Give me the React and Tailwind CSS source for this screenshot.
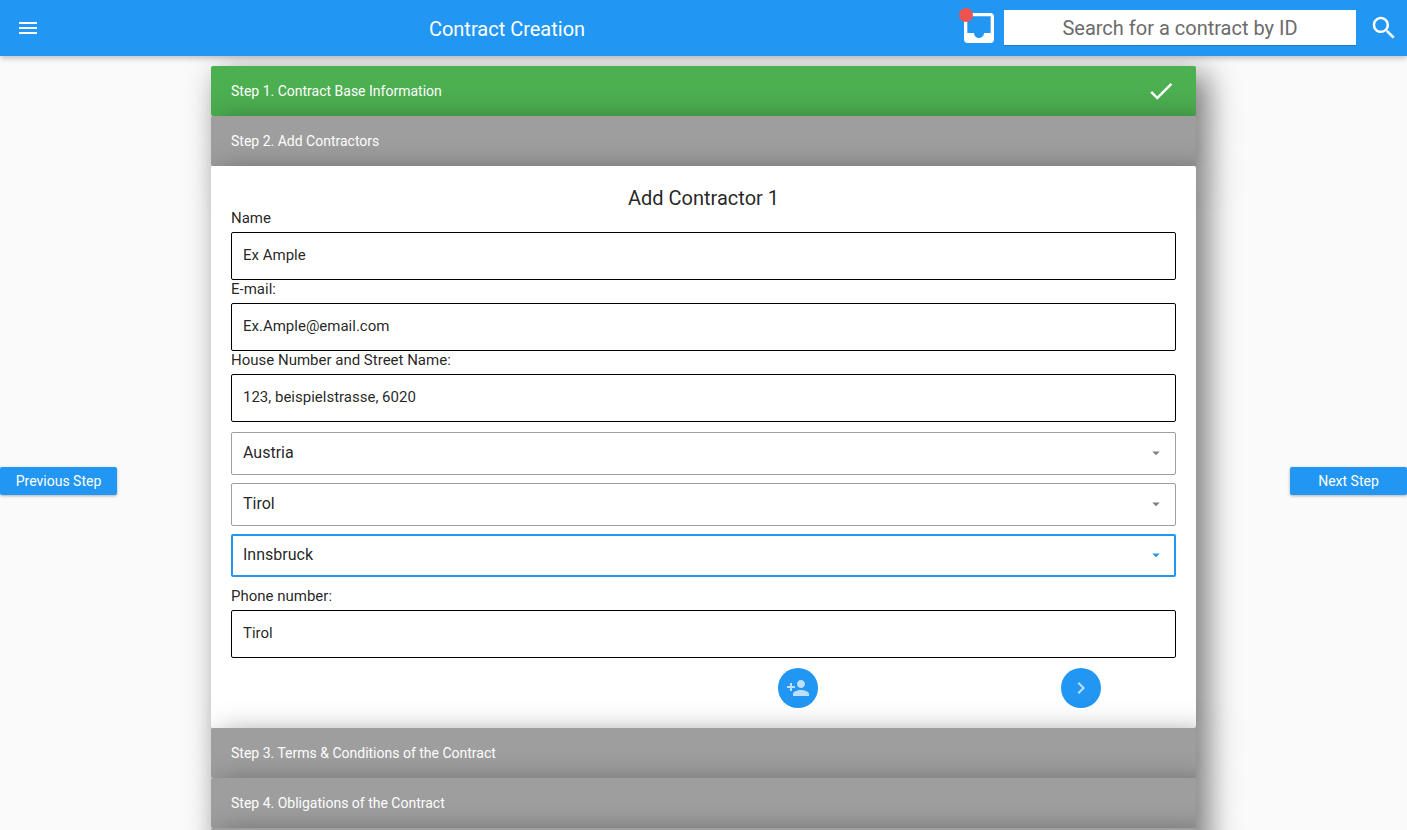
import React from "react";

const ICONS = {
  menu: "M3 18h18v-2H3v2zm0-5h18v-2H3v2zm0-7v2h18V6H3z",
  inbox:
    "M19 3H4.99c-1.11 0-1.98.89-1.98 2L3 19c0 1.1.88 2 1.99 2H19c1.1 0 2-.9 2-2V5c0-1.11-.9-2-2-2zm0 12h-4c0 1.66-1.35 3-3 3s-3-1.34-3-3H4.99V5H19v10z",
  search:
    "M15.5 14h-.79l-.28-.27C15.41 12.59 16 11.11 16 9.5 16 5.91 13.09 3 9.5 3S3 5.91 3 9.5 5.91 16 9.5 16c1.61 0 3.09-.59 4.23-1.57l.27.28v.79l5 4.99L20.49 19l-4.99-5zm-6 0C7.01 14 5 11.99 5 9.5S7.01 5 9.5 5 14 7.01 14 9.5 11.99 14 9.5 14z",
  check: "M9 16.17L4.83 12l-1.42 1.41L9 19 21 7l-1.41-1.41z",
  personAdd:
    "M15 12c2.21 0 4-1.79 4-4s-1.79-4-4-4-4 1.79-4 4 1.79 4 4 4zm-9-2V7H4v3H1v2h3v3h2v-3h3v-2H6zm9 4c-2.67 0-8 1.34-8 4v2h16v-2c0-2.66-5.33-4-8-4z",
  chevron: "M10 6L8.59 7.41 13.17 12l-4.58 4.59L10 18l6-6z",
  caret: "M7 10l5 5 5-5z",
};

function Icon({ name, className }) {
  return (
    <svg viewBox="0 0 24 24" fill="currentColor" className={className}>
      <path d={ICONS[name]} />
    </svg>
  );
}

const SHADOW = "rounded-[2px] shadow-[10px_10px_30px_2px_rgba(0,0,0,0.5)]";

function StepBar({ title, done }) {
  return (
    <div
      className={`${SHADOW} relative flex h-[50px] shrink-0 items-center justify-between pr-5 pl-5 text-sm text-white ${
        done ? "bg-[#4caf50]" : "bg-[#9e9e9e]"
      }`}
    >
      <span>{title}</span>
      {done && <Icon name="check" className="size-[30px] text-white" />}
    </div>
  );
}

function Field({ label, value }) {
  return (
    <label className="block text-[15px] text-black/87">
      <span className="block h-[23px] leading-[18px]">{label}</span>
      <input
        defaultValue={value}
        className="block h-12 w-full rounded-[2px] border border-black bg-white px-[11px] pb-[3px] outline-none"
      />
    </label>
  );
}

function Select({ value, active }) {
  return (
    <div
      className={`flex h-[43px] items-center justify-between rounded-[2px] text-base ${
        active ? "border-2 border-[#2196f3] pr-[9px] pl-[10px]" : "border border-[#9e9e9e] pr-[10px] pl-[11px]"
      }`}
    >
      <span className="pb-[2px] text-black/87">{value}</span>
      <Icon name="caret" className={`mb-px size-[18px] ${active ? "text-[#2196f3]" : "text-[#808080]"}`} />
    </div>
  );
}

function SideButton({ children }) {
  return (
    <button className="h-7 w-[117px] rounded-[2px] bg-[#2196f3] text-sm text-white shadow-[0_1px_3px_rgba(0,0,0,0.3)]">
      {children}
    </button>
  );
}

function RoundButton({ icon }) {
  return (
    <button className="flex size-10 items-center justify-center rounded-full bg-[#2196f3] text-white/70">
      <Icon name={icon} className="size-6" />
    </button>
  );
}

export default function App() {
  return (
    <div className="flex h-[830px] w-full flex-col overflow-hidden bg-[#fafafa] font-['Roboto',sans-serif]">
      <header className="relative z-10 flex h-14 shrink-0 items-center bg-[#2196f3] text-white shadow-[0_2px_6px_rgba(0,0,0,0.25)]">
        <Icon name="menu" className="ml-4 size-6" />
        <h1 className="ml-[17px] w-[900px] pt-px text-center text-xl">Contract Creation</h1>
        <div className="relative ml-[2px]">
          <Icon name="inbox" className="size-10" />
          <span className="absolute top-0 left-0 size-[14px] rounded-full bg-[#ef5350]" />
        </div>
        <input
          placeholder="Search for a contract by ID"
          className="ml-[5px] h-9 w-[352px] border-b border-[#1b78c2] bg-white text-center text-xl outline-none placeholder:text-[#6b6b6b]"
        />
        <Icon name="search" className="ml-[13px] size-[30px]" />
      </header>

      <main className="flex min-h-0 flex-1">
        <aside className="w-[211px] pt-[411px]">
          <SideButton>Previous Step</SideButton>
        </aside>

        <section className="flex w-[985px] shrink-0 flex-col pt-[10px]">
          <StepBar title="Step 1. Contract Base Information" done />
          <StepBar title="Step 2. Add Contractors" />
          <div className={`${SHADOW} relative h-[562px] shrink-0 bg-white px-5 pt-5`}>
            <h2 className="h-[23px] text-center text-xl leading-[25px] text-black/87">
              Add Contractor 1
            </h2>
            <Field label="Name" value="Ex Ample" />
            <Field label="E-mail:" value="Ex.Ample@email.com" />
            <Field label="House Number and Street Name:" value="123, beispielstrasse, 6020" />
            <div className="flex flex-col gap-2 py-[10px]">
              <Select value="Austria" />
              <Select value="Tirol" />
              <Select value="Innsbruck" active />
            </div>
            <Field label="Phone number:" value="Tirol" />
            <div className="flex gap-[243.4px] pt-[10px] pl-[547px]">
              <RoundButton icon="personAdd" />
              <RoundButton icon="chevron" />
            </div>
          </div>
          <StepBar title="Step 3. Terms & Conditions of the Contract" />
          <StepBar title="Step 4. Obligations of the Contract" />
          <StepBar />
        </section>

        <aside className="flex flex-1 items-start justify-end pt-[411px]">
          <SideButton>Next Step</SideButton>
        </aside>
      </main>
    </div>
  );
}
